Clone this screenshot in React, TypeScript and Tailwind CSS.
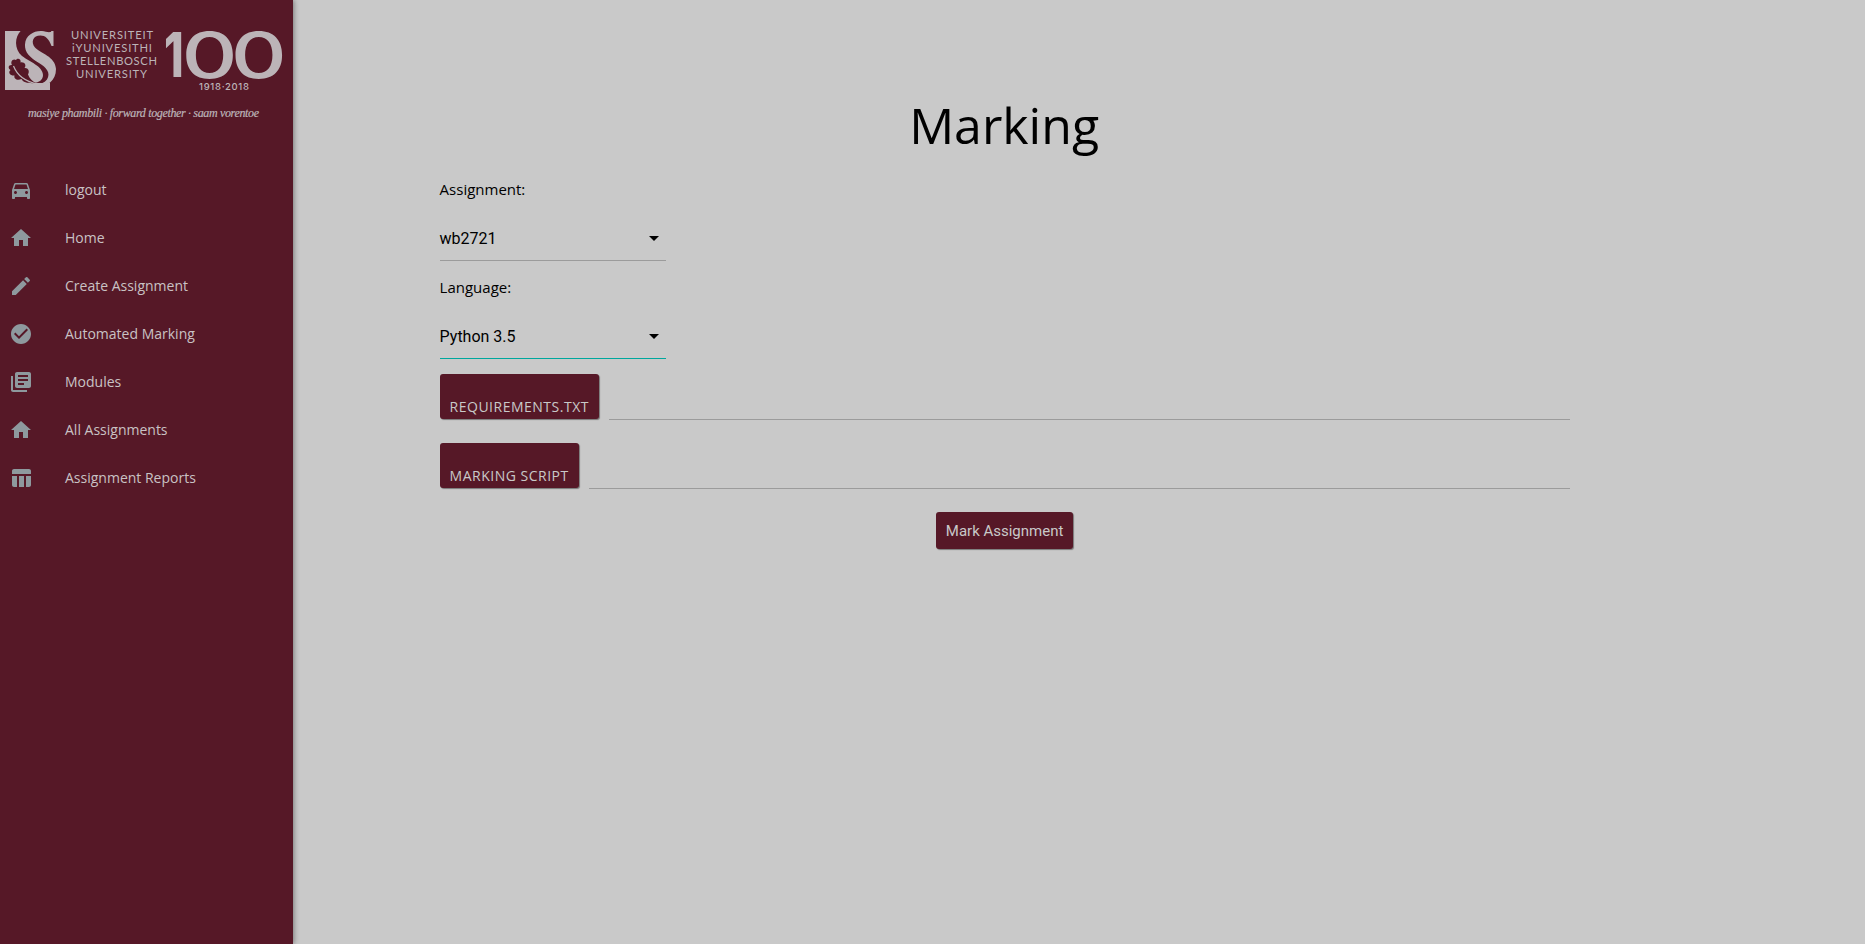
import React from "react";
import {
  MdDirectionsCar,
  MdHome,
  MdEdit,
  MdCheckCircle,
  MdLibraryBooks,
  MdTableChart,
  MdArrowDropDown,
} from "react-icons/md";

function Logo() {
  return (
    <svg width="293" height="130" viewBox="0 0 293 130" className="block shrink-0" fill="#bcb4b8">
      <path d="M5 31H50V90H5Z" />
      <path fill="#561827" d="M21 30.500C14.500 37 14 49 22 56C30 62 42.500 66 43 75C43 80 39 82.500 34 83L51 83V30.500Z" />
      <path d="M53.500 31V46H51.500C49 38.500 45 35.500 40.500 35.500C33 35.500 30.500 42 35 47.500C40 53 55.500 56.500 56 69C56 81 47 86.500 38 86.500C33.500 86.500 29 85 26 83C35 85.500 43 84.500 47 79.500C51 73 46.500 67.500 39 63C30 57.500 24.500 52.500 25 44.500C25.500 35 34 30.500 42 31C46 31.300 50 33.500 51.500 31Z" />
      <path
        fill="#561827"
        d="M36 83C30 83.500 23 83 21.500 79C17.500 81 13.500 79 14.500 75.500C10.500 76 7.500 72.500 10.500 70C7.500 68 8.500 64.500 12 65C10 61.500 13 58 16 60C17.500 57.500 21.500 59 20.500 62.500C24 61.500 27 65 24.500 68C28 67.500 30 71 28 74.500C29.500 78.500 32 81 36 83Z"
      />
      <path d="M13.500 66C17 75 24 81.500 38 84" fill="none" stroke="#bcb4b8" strokeWidth="1.200" />
      <g fontFamily="Lato, sans-serif" fontSize="11.200">
        <text x="71" y="39" textLength="82">UNIVERSITEIT</text>
        <text x="72" y="52" textLength="80">iYUNIVESITHI</text>
        <text x="66" y="65" textLength="91">STELLENBOSCH</text>
        <text x="76" y="77.500" textLength="71">UNIVERSITY</text>
      </g>
      <g fontFamily="Inter, sans-serif">
        <text transform="translate(164 77) scale(0.720 1)" fontWeight="800" fontSize="62">1</text>
        <text transform="translate(181.500 78) scale(1.380 1)" x="0 35.700" fontWeight="500" fontSize="63">00</text>
        <text x="199" y="89.500" textLength="50" fontWeight="500" fontSize="9.500">1918·2018</text>
      </g>
      <text x="28" y="117" textLength="231" fontFamily="'Liberation Serif', serif" fontStyle="italic" fontSize="12" stroke="#bcb4b8" strokeWidth="0.200">
        masiye phambili · forward together · saam vorentoe
      </text>
    </svg>
  );
}

const items = [
  { label: "logout", Icon: MdDirectionsCar },
  { label: "Home", Icon: MdHome },
  { label: "Create Assignment", Icon: MdEdit },
  { label: "Automated Marking", Icon: MdCheckCircle },
  { label: "Modules", Icon: MdLibraryBooks },
  { label: "All Assignments", Icon: MdHome },
  { label: "Assignment Reports", Icon: MdTableChart },
];

function Select({ value, line }: { value: string; line: string }) {
  return (
    <div className={`flex h-[46px] w-[226px] items-center justify-between border-b font-['Roboto',sans-serif] text-base ${line}`}>
      <span className="pt-[2px]">{value}</span>
      <MdArrowDropDown size={24} />
    </div>
  );
}

function FileField({ label, width }: { label: string; width: string }) {
  return (
    <div className="flex h-[46px] gap-[10px]">
      <div className={`flex h-[45px] items-end rounded-[3px] bg-[#561827] pb-px pl-[10px] text-[#c9c9c9] shadow-[1px_1px_1px_rgba(0,0,0,0.4)] ${width}`}>
        <span className="h-[23px] whitespace-nowrap text-[14px] leading-[23px] tracking-[0.5px]">{label}</span>
      </div>
      <div className="flex-1 border-b border-[#9b9b9b]" />
    </div>
  );
}

export default function App() {
  return (
    <div className="flex h-[944px] w-[1865px] overflow-hidden bg-[#c9c9c9] font-['Open_Sans',sans-serif] text-black">
      <nav className="flex w-[293px] shrink-0 flex-col bg-[#561827] shadow-[1px_0_5px_rgba(0,0,0,0.4)]">
        <Logo />
        <ul className="mt-9">
          {items.map(({ label, Icon }) => (
            <li key={label} className="flex h-12 items-center pl-[9px] text-sm text-[#c9c2c4]">
              <Icon size={24} color="#8e999e" />
              <span className="ml-8">{label}</span>
            </li>
          ))}
        </ul>
      </nav>
      <main className="ml-[146.6px] flex w-[1130px] flex-col">
        <h1 className="mt-[91px] pr-px text-center text-[50px] leading-[68px]">Marking</h1>
        <label className="mt-[19px] text-[15px] leading-[22px]">Assignment:</label>
        <div className="mt-[15px]">
          <Select value="wb2721" line="border-[#9b9b9b]" />
        </div>
        <label className="mt-[15px] text-[15px] leading-[22px]">Language:</label>
        <div className="mt-[15px]">
          <Select value="Python 3.5" line="border-[#00a79d]" />
        </div>
        <div className="mt-[15px] flex flex-col gap-[23px]">
          <FileField label="REQUIREMENTS.TXT" width="w-[159px]" />
          <FileField label="MARKING SCRIPT" width="w-[139px]" />
        </div>
        <button className="mt-[23px] h-[37px] w-[137px] self-center rounded-[3px] bg-[#561827] pt-px font-['Roboto',sans-serif] text-[15px] text-[#c9c9c9] shadow-[1px_1px_1px_rgba(0,0,0,0.4)]">
          Mark Assignment
        </button>
      </main>
    </div>
  );
}
